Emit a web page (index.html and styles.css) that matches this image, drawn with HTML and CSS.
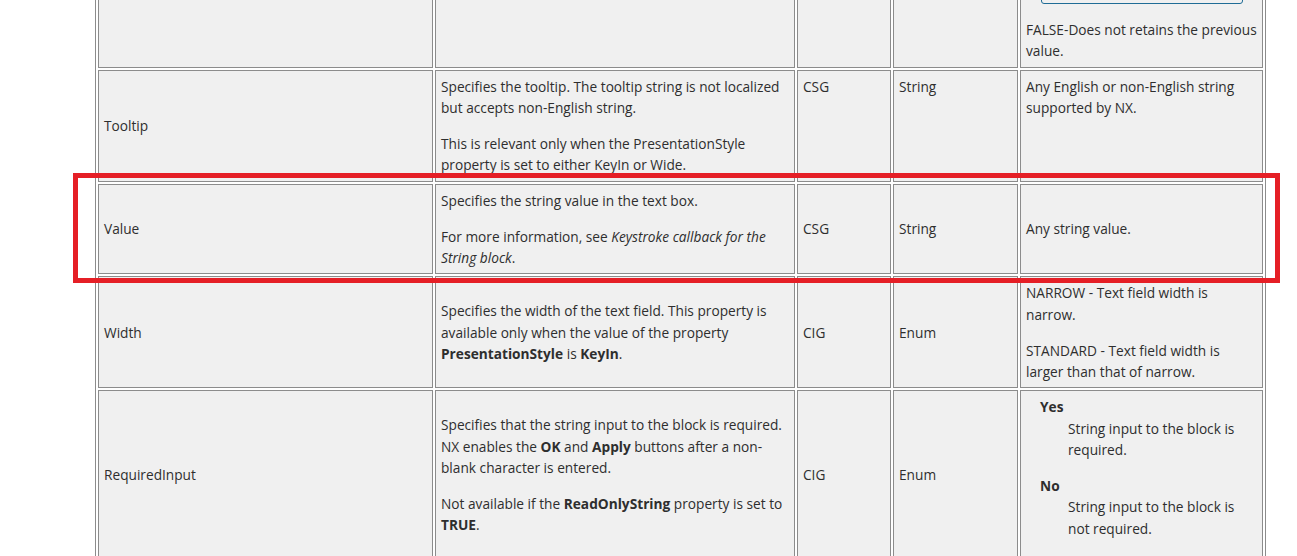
FILE: index.html
```html
<!DOCTYPE html>
<html lang="en">
<head>
<meta charset="utf-8">
<title>String block properties</title>
<link rel="stylesheet" href="styles.css">
</head>
<body>
<div class="page">
  <table class="props">
    <colgroup>
      <col class="c-name">
      <col class="c-desc">
      <col class="c-access">
      <col class="c-type">
      <col class="c-values">
    </colgroup>
    <tr>
      <td></td>
      <td></td>
      <td></td>
      <td></td>
      <td class="top">
        <div class="figure"></div>
        <p>FALSE-Does not retains the previous value.</p>
      </td>
    </tr>
    <tr>
      <td>Tooltip</td>
      <td class="top">
        <p>Specifies the tooltip. The tooltip string is not localized but accepts non-English string.</p>
        <p>This is relevant only when the PresentationStyle property is set to either KeyIn or Wide.</p>
      </td>
      <td class="top">CSG</td>
      <td class="top">String</td>
      <td class="top">Any English or non-English string supported by NX.</td>
    </tr>
    <tr>
      <td>Value</td>
      <td class="top">
        <p>Specifies the string value in the text box.</p>
        <p>For more information, see <em>Keystroke callback for the String block</em>.</p>
      </td>
      <td>CSG</td>
      <td>String</td>
      <td>Any string value.</td>
    </tr>
    <tr>
      <td>Width</td>
      <td>
        <p>Specifies the width of the text field. This property is available only when the value of the property <strong>PresentationStyle</strong> is <strong>KeyIn</strong>.</p>
      </td>
      <td>CIG</td>
      <td>Enum</td>
      <td class="top">
        <p>NARROW - Text field width is narrow.</p>
        <p>STANDARD - Text field width is larger than that of narrow.</p>
      </td>
    </tr>
    <tr>
      <td>RequiredInput</td>
      <td>
        <p>Specifies that the string input to the block is required. NX enables the <strong>OK</strong> and <strong>Apply</strong> buttons after a non-blank character is entered.</p>
        <p>Not available if the <strong>ReadOnlyString</strong> property is set to <strong>TRUE</strong>.</p>
      </td>
      <td>CIG</td>
      <td>Enum</td>
      <td class="top">
        <dl class="opts">
          <dt>Yes</dt>
          <dd>String input to the block is required.</dd>
          <dt>No</dt>
          <dd>String input to the block is not required.</dd>
        </dl>
      </td>
    </tr>
  </table>
  <div class="highlight"></div>
</div>
</body>
</html>
```

FILE: styles.css
```css
html, body {
  margin: 0;
  padding: 0;
  background: #ffffff;
}

body {
  font-family: "Open Sans", "Noto Sans", "DejaVu Sans", sans-serif;
  font-size: 13.7px;
  line-height: 21.333px;
  color: #2e2e2e;
  overflow: hidden;
}

.page {
  position: relative;
  height: 556px;
  overflow: hidden;
}

.props {
  table-layout: fixed;
  width: 1171px;
  margin: -127px 0 0 95px;
  border: 1px solid #8c8c8c;
  border-spacing: 2px;
  border-collapse: separate;
}

.c-name { width: 335px; }
.c-desc { width: 360px; }
.c-access { width: 94px; }
.c-type { width: 125px; }
.c-values { width: 243px; }

.props td {
  border: 1px solid #8c8c8c;
  background: #f0f0f0;
  padding: 5px;
  vertical-align: middle;
  text-align: left;
}

.props td.top {
  vertical-align: top;
}

.props p {
  margin: 0;
}

.props p + p {
  margin-top: 14.667px;
}

.figure {
  height: 120px;
  margin: 0 14px 15px 15px;
  border: 1px solid #1f6c96;
  border-radius: 3px;
  background: #f0f0f0;
}

.opts {
  margin: 0 0 0 14px;
}

.opts dt {
  font-weight: 700;
}

.opts dd {
  margin: 0 0 14.667px 28px;
}

.highlight {
  position: absolute;
  left: 73px;
  top: 173px;
  width: 1207px;
  height: 110px;
  box-sizing: border-box;
  border: 5px solid #e51f26;
}
```
